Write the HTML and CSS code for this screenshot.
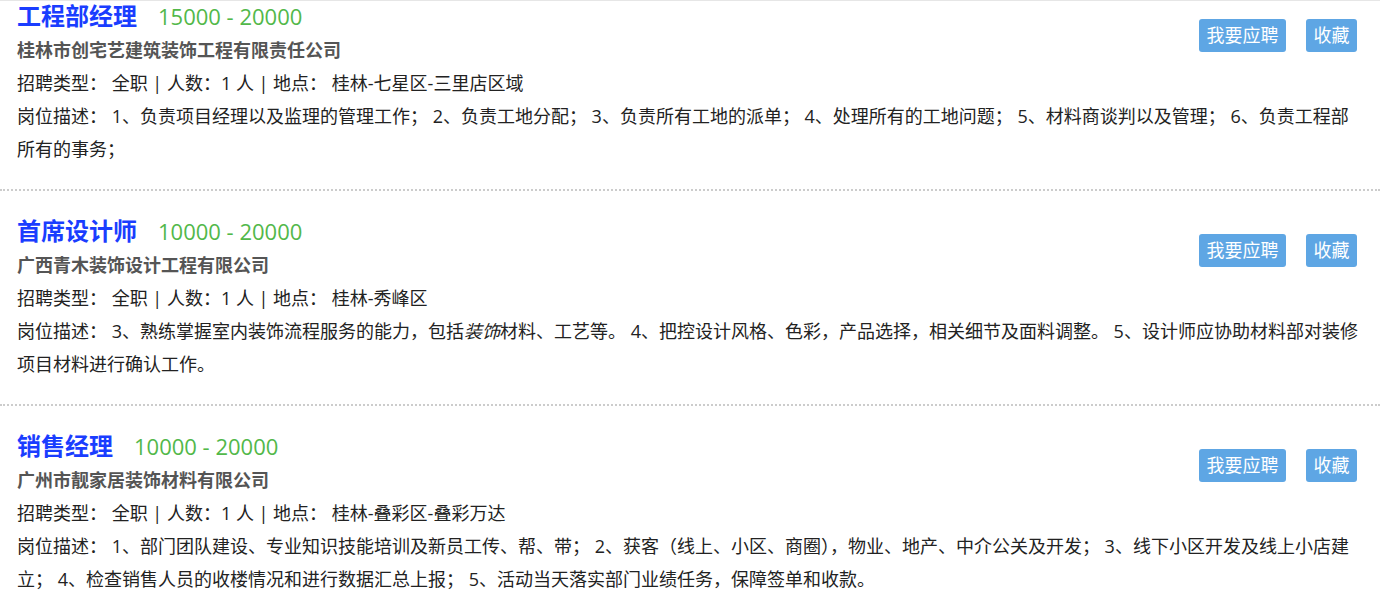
FILE: index.html
```html
<!DOCTYPE html>
<html lang="zh-CN">
<head>
    <meta charset="UTF-8">
    <meta name="viewport" content="width=device-width, initial-scale=1.0">
    <title>招聘职位</title>
    <link rel="stylesheet" href="styles.css">
</head>
<body>
    <div class="job-list">
        <div class="job">
            <div class="actions">
                <a class="btn" href="#">我要应聘</a>
                <a class="btn" href="#">收藏</a>
            </div>
            <h3 class="job-title">工程部经理<span class="salary">15000 - 20000</span></h3>
            <p class="company">桂林市创宅艺建筑装饰工程有限责任公司</p>
            <p class="meta">招聘类型： 全职 | 人数：1 人 | 地点： 桂林-七星区-三里店区域</p>
            <p class="desc">岗位描述： 1、负责项目经理以及监理的管理工作； 2、负责工地分配； 3、负责所有工地的派单； 4、处理所有的工地问题； 5、材料商谈判以及管理； 6、负责工程部所有的事务；</p>
        </div>

        <div class="job">
            <div class="actions">
                <a class="btn" href="#">我要应聘</a>
                <a class="btn" href="#">收藏</a>
            </div>
            <h3 class="job-title">首席设计师<span class="salary">10000 - 20000</span></h3>
            <p class="company">广西青木装饰设计工程有限公司</p>
            <p class="meta">招聘类型： 全职 | 人数：1 人 | 地点： 桂林-秀峰区</p>
            <p class="desc">岗位描述： 3、熟练掌握室内装饰流程服务的能力，包括<em>装饰</em>材料、工艺等。 4、把控设计风格、色彩，产品选择，相关细节及面料调整。 5、设计师应协助材料部对装修项目材料进行确认工作。</p>
        </div>

        <div class="job">
            <div class="actions">
                <a class="btn" href="#">我要应聘</a>
                <a class="btn" href="#">收藏</a>
            </div>
            <h3 class="job-title">销售经理<span class="salary">10000 - 20000</span></h3>
            <p class="company">广州市靓家居装饰材料有限公司</p>
            <p class="meta">招聘类型： 全职 | 人数：1 人 | 地点： 桂林-叠彩区-叠彩万达</p>
            <p class="desc">岗位描述： 1、部门团队建设、专业知识技能培训及新员工传、帮、带； 2、获客（线上、小区、商圈），物业、地产、中介公关及开发； 3、线下小区开发及线上小店建立； 4、检查销售人员的收楼情况和进行数据汇总上报； 5、活动当天落实部门业绩任务，保障签单和收款。</p>
        </div>
    </div>
</body>
</html>
```

FILE: styles.css
```css
body {
    font-family: "Open Sans", "Noto Sans CJK SC", sans-serif;
    margin: 0;
    background-color: #fff;
    color: #222;
    font-size: 18px;
}
.job-list {
    width: 1380px;
    border-top: 1px solid #e6e6e6;
}
.job {
    padding: 22px 23px 23px 17px;
    border-bottom: 2px dotted #ccc;
}
.job:first-child {
    padding-top: 0;
    margin-top: -3px;
}
.job-title {
    margin: 0;
    font-size: 24px;
    line-height: 36px;
    font-weight: bold;
    color: #1a3dff;
}
.salary {
    margin-left: 21px;
    font-size: 22px;
    font-weight: normal;
    color: #52b84a;
}
.company {
    margin: 0;
    font-size: 18px;
    line-height: 33px;
    font-weight: bold;
    color: #555;
}
.meta,
.desc {
    margin: 0;
    line-height: 33px;
}
.desc {
    margin-right: -3px;
}
.desc em {
    font-style: italic;
}
.actions {
    float: right;
    display: flex;
    gap: 20px;
    margin-top: 21px;
}
.btn {
    display: block;
    padding: 0 7.5px;
    font-size: 18px;
    line-height: 33px;
    color: #fff;
    text-decoration: none;
    background-color: #5ea6e4;
    border-radius: 3px;
}
```
